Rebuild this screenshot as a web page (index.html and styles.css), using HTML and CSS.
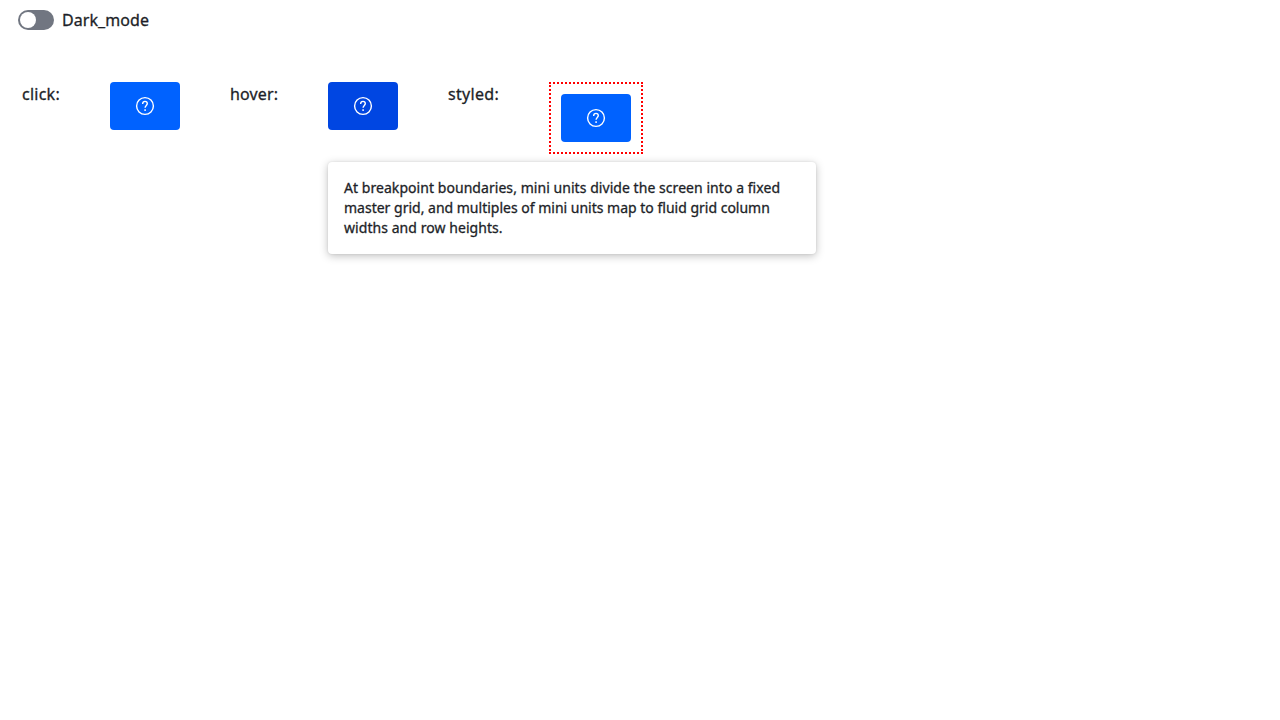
FILE: index.html
```
<!DOCTYPE html>
<html lang="en">
<head>
<meta charset="utf-8">
<title>Help buttons</title>
<link rel="stylesheet" href="styles.css">
</head>
<body>
<svg class="sprite" aria-hidden="true">
  <symbol id="help" viewBox="0 0 24 24">
    <circle cx="12" cy="12" r="8.4" fill="none" stroke="currentColor" stroke-width="1.4"/>
    <path d="M9.7 9.9V9.6a2.3 2.2 0 0 1 4.6 0c0 1.8-2.2 2-2.2 4.2" fill="none" stroke="currentColor" stroke-width="1.4"/>
    <rect x="11.3" y="15.3" width="1.6" height="1.6" fill="currentColor"/>
  </symbol>
</svg>
<label class="toggle"><span class="track"><span class="thumb"></span></span><span class="toggle-label">Dark_mode</span></label>
<main class="demo">
  <span class="name click">click:</span>
  <button class="btn"><svg class="icon"><use href="#help"/></svg></button>
  <span class="name hover">hover:</span>
  <div class="anchor">
    <button class="btn active"><svg class="icon"><use href="#help"/></svg></button>
    <div class="bubble">
      <div class="line l1">At breakpoint boundaries, mini units divide the screen into a fixed</div>
      <div class="line">master grid, and multiples of mini units map to fluid grid column</div>
      <div class="line l3">widths and row heights.</div>
    </div>
  </div>
  <span class="name styled">styled:</span>
  <div class="outlined"><button class="btn"><svg class="icon"><use href="#help"/></svg></button></div>
</main>
</body>
</html>
```
FILE: styles.css
```
* { box-sizing: border-box; }
body { display: flex; flex-direction: column; min-height: 100vh; margin: 0; background: #fff; color: #1d1f28; font: 16px/24px "Noto Sans", sans-serif; -webkit-text-stroke: .3px currentColor; }
.sprite { display: none; }
.toggle { display: flex; align-items: center; gap: 8px; height: 24px; margin: 8px 18px 0; }
.track { width: 36px; height: 20px; padding: 2px; border-radius: 10px; background: #717681; }
.thumb { display: block; width: 16px; height: 16px; border-radius: 50%; background: #fff; }
.toggle-label { white-space: nowrap; letter-spacing: .07px; }
.demo { flex: 1; display: flex; align-items: flex-start; gap: 50px; padding: 50px 22px 0; }
.name { white-space: nowrap; }
.click { width: 38px; letter-spacing: .25px; }
.hover { width: 48px; letter-spacing: .15px; }
.styled { width: 51px; letter-spacing: .3px; }
.btn { display: flex; align-items: center; justify-content: center; width: 70px; height: 48px; padding: 0; border: 0; border-radius: 4px; background: #0062ff; color: #fff; }
.btn.active { background: #0046e2; }
.icon { width: 24px; height: 24px; }
.anchor { position: relative; }
.bubble { position: absolute; z-index: 2; top: 80px; left: 0; width: 488px; height: 92px; padding: 16px; border-radius: 4px; background: #fff; box-shadow: 0 0 2px rgba(0,0,0,.1), 0 2px 8px rgba(0,0,0,.25); font-size: 14px; line-height: 20px; }
.line { white-space: nowrap; }
.l1 { letter-spacing: .053px; }
.l3 { letter-spacing: .06px; }
.outlined { padding: 10px; border: 2px dotted #f00; }
```
